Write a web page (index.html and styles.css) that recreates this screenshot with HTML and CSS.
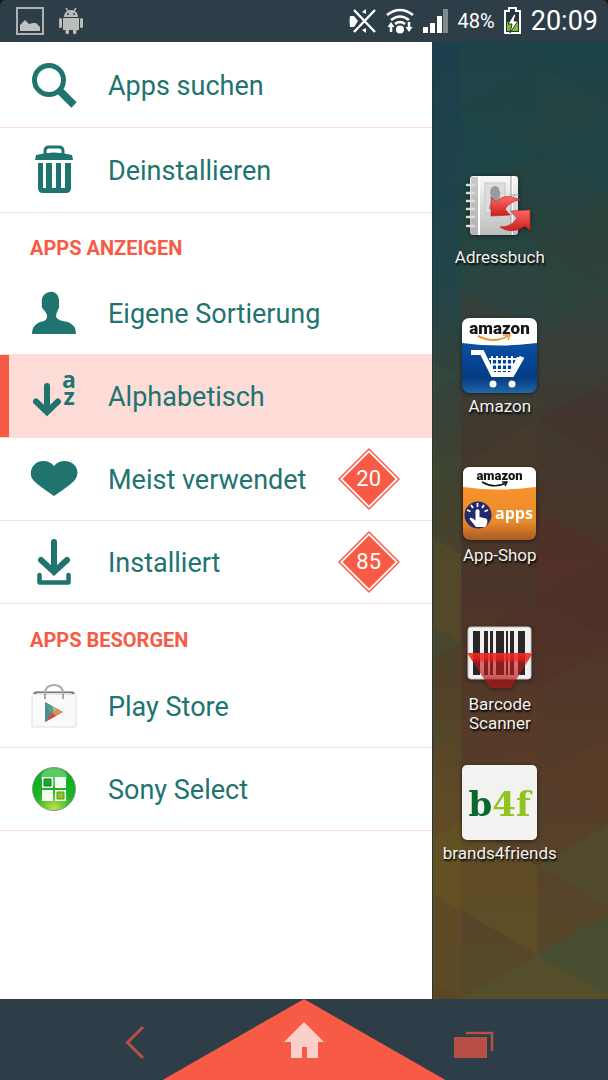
FILE: index.html
```html
<!DOCTYPE html>
<html lang="de">
<head>
<meta charset="utf-8">
<meta name="viewport" content="width=device-width, initial-scale=1">
<title>Apps</title>
<link rel="stylesheet" href="styles.css">
</head>
<body>
<div class="screen">
  <header class="status">
    <div class="status-group">
      <svg class="ico-picture" width="28" height="28" viewBox="0 0 28 28"><path d="M1 1H27V27H1Z" fill="none" stroke="#aeb2b0" stroke-width="2"/><path d="M4 23V18L9 13L13 17L17 16L20 16L24 20V24H4Z" fill="#bfc2c0"/></svg>
      <svg width="26" height="28" viewBox="0 0 26 28" fill="#b9bcb9"><path d="M6 10C6 6 9 3 13 3S20 6 20 10Z"/><path d="M8 1L10 4M18 1L16 4" stroke="#b9bcb9" stroke-width="1.4"/><path d="M5 11H21V23H18.500V26Q17 28.500 15 26V23H11V26Q9 28.500 7.500 26V23H5Z"/><rect x="1" y="11" width="3" height="10" rx="1.500"/><rect x="22" y="11" width="3" height="10" rx="1.500"/><circle cx="10" cy="7" r="1" fill="#2d3e48"/><circle cx="16" cy="7" r="1" fill="#2d3e48"/></svg>
    </div>
    <div class="status-group status-right">
      <svg width="28" height="28" viewBox="0 0 28 28"><path d="M1 9H5L9 14L5 20H1Q0 14 1 9Z" fill="#fff"/><path d="M17 2V7L13 5ZM17 26V21L13 23Z" fill="#fff"/><path d="M5 3L26 25M26 3L5 25" stroke="#fff" stroke-width="2.400"/></svg>
      <svg width="28" height="28" viewBox="0 0 28 28" fill="none" stroke="#fff" stroke-width="2.600"><path d="M1 8Q14-2 27 8M5 13Q14 6 23 13M9 17Q14 13 19 17"/><circle cx="14" cy="22.500" r="4" fill="#fff" stroke="none"/><path d="M5 25V20M23 15V21" stroke-width="2.500"/><path d="M1.500 20L5 15L8.500 20ZM19.500 20L23 25L26.500 20Z" fill="#fff" stroke="none"/></svg>
      <svg class="ico-signal" width="26" height="24" viewBox="0 0 26 24" fill="#fff"><path d="M0 18H5V24H0ZM7 14H12V24H7ZM14 7H19V24H14Z"/><path d="M20 0H25V24H20Z" fill="#848a8c"/></svg>
      <span class="percent">48%</span>
      <svg width="18" height="28" viewBox="0 0 18 28"><path d="M5 1H12V4H16V26H1V4H5Z" fill="#26343b" stroke="#fff" stroke-width="2"/><path d="M3 15H14V24H3Z" fill="#7fc01c"/><path d="M10 7L4 17H8L6 26L14 14H10L12 7Z" fill="#fff" stroke="#26343b"/></svg>
      <time class="clock">20:09</time>
    </div>
  </header>

  <main class="main">
    <nav class="drawer">
      <ul class="group tall">
        <li><a class="row" href="#suchen"><svg class="icon" viewBox="0 0 48 48"><circle cx="19" cy="19" r="14.500" fill="none" stroke="#20746f" stroke-width="5"/><path d="M29 29L44 44" stroke="#20746f" stroke-width="7.500"/></svg><span class="label">Apps suchen</span></a></li>
        <li><a class="row" href="#deinstallieren"><svg class="icon" viewBox="0 0 48 48" fill="#20746f"><path d="M15 9V5Q15 1 19 1H29Q33 1 33 5V9" fill="none" stroke="#20746f" stroke-width="3"/><path d="M6 9Q24 4 42 9L43 14H5Z"/><path fill-rule="evenodd" d="M8 17H41V42Q41 47 36 47H13Q8 47 8 42ZM13 17V42H16V17ZM22 17V42H26V17ZM31 17V42H35V17Z"/></svg><span class="label">Deinstallieren</span></a></li>
      </ul>
      <h2 class="heading">APPS ANZEIGEN</h2>
      <ul class="group">
        <li><a class="row" href="#eigene"><svg class="icon" viewBox="0 0 48 48" fill="#20746f"><path d="M20 3C26 2 30 7 29 16Q30 18 28 21Q26 24 26 28Q28 32 38 33Q46 36 46 45H2Q2 36 10 33Q18 32 17 26Q16 23 13 20Q11 17 12 16C11 9 13 4 20 3Z"/></svg><span class="label">Eigene Sortierung</span></a></li>
        <li><a class="row active" href="#alphabetisch" aria-current="true"><svg class="icon" viewBox="0 0 48 48"><path d="M17 14V39M6 29.500L17 40L28 29.500" fill="none" stroke="#20746f" stroke-width="6" stroke-linecap="round"/><text class="az" x="39" y="16">a</text><text class="az" x="39" y="33">z</text></svg><span class="label">Alphabetisch</span></a></li>
        <li><a class="row" href="#meist"><svg class="icon" viewBox="0 0 48 48" fill="#20746f"><path d="M24 11C28 6 34 5 40 7C48 10 50 20 44 26Q39 31 24 41Q9 31 4 26C-2 20 1 10 8 7C14 5 20 6 24 11Z"/></svg><span class="label">Meist verwendet</span><span class="badge"><svg class="badge-bg" viewBox="0 0 62 62"><path d="M31 1L61 31L31 61L1 31Z" fill="#fff" stroke="#f75b45" stroke-width="1.500" stroke-linejoin="round"/><path d="M31 4.500L57.500 31L31 57.500L4.500 31Z" fill="#f75b45"/></svg><span class="count">20</span></span></a></li>
        <li><a class="row" href="#installiert"><svg class="icon" viewBox="0 0 48 48" fill="none" stroke="#20746f"><path d="M24 4V32M11 22L24 34L37 22" stroke-width="6" stroke-linecap="round"/><path d="M9.500 37V44.500H38.500V37" stroke-width="4.500" stroke-linecap="round" stroke-linejoin="round"/></svg><span class="label">Installiert</span><span class="badge"><svg class="badge-bg" viewBox="0 0 62 62"><path d="M31 1L61 31L31 61L1 31Z" fill="#fff" stroke="#f75b45" stroke-width="1.500" stroke-linejoin="round"/><path d="M31 4.500L57.500 31L31 57.500L4.500 31Z" fill="#f75b45"/></svg><span class="count">85</span></span></a></li>
      </ul>
      <h2 class="heading heading-wide">APPS BESORGEN</h2>
      <ul class="group">
        <li><a class="row" href="#play"><svg class="icon" viewBox="0 0 48 48"><path d="M4 10H44L46 13V44Q46 45 44 45H4Q2 45 2 44V13Z" fill="#fafafa" stroke="#dcdede"/><path d="M5 9.500H43L45 12H3Z" fill="#777"/><path d="M7 11H41L43 13H5Z" fill="#e4e4e4"/><path d="M15 17V12Q15 3 24 3T33 12V17" fill="none" stroke="#a9a9a9" stroke-width="2"/><path d="M15 20V40L33 30Z" fill="#4a918d"/><path d="M15 20L27 27L20 32Z" fill="#5b9b90"/><path d="M27 27L33 30L25 34L22 30Z" fill="#e9894e"/><path d="M15 40L22 31L26 34Z" fill="#e0434c"/><path d="M22 24L27 27L24 30Z" fill="#a9c866"/></svg><span class="label">Play Store</span></a></li>
        <li><a class="row" href="#sony"><svg class="icon" viewBox="0 0 48 48"><defs><radialGradient id="bubble" cx=".5" cy=".95" r=".75"><stop offset="0" stop-color="#c3e24e"/><stop offset=".35" stop-color="#5fc52f"/><stop offset=".6" stop-color="#1fb326"/><stop offset="1" stop-color="#12ad22"/></radialGradient></defs><circle cx="24" cy="24" r="21.500" fill="url(#bubble)" stroke="#829b87"/><ellipse cx="24" cy="12" rx="13" ry="9" fill="#b6ecb2" opacity=".45"/><path d="M12 12H23V23H12ZM25 12H36V23H25ZM12 25H23V36H12ZM25 25H36V36H25Z" fill="#f3faef"/><path d="M14 14H21V21H14Z" fill="#18a83a" stroke="#0b8120"/><path d="M27 27H34V34H27Z" fill="#8fc224" stroke="#4a9b1a"/></svg><span class="label">Sony Select</span></a></li>
      </ul>
    </nav>

    <section class="home">
      <svg class="wallpaper" viewBox="0 0 176 957" preserveAspectRatio="none">
        <defs>
          <linearGradient id="base" x1="0" y1="0" x2="0" y2="1"><stop offset="0" stop-color="#1c4348"/><stop offset=".16" stop-color="#254340"/><stop offset=".3" stop-color="#36403a"/><stop offset=".42" stop-color="#42382e"/><stop offset=".56" stop-color="#4b3429"/><stop offset=".7" stop-color="#533928"/><stop offset=".84" stop-color="#57412a"/><stop offset="1" stop-color="#564a29"/></linearGradient>
          <linearGradient id="edge" x1="0" y1="0" x2="0" y2="1"><stop offset="0" stop-color="#1b3f4d"/><stop offset=".25" stop-color="#22454a"/><stop offset=".36" stop-color="#35423a"/><stop offset=".5" stop-color="#45432d"/><stop offset=".66" stop-color="#4f4029"/><stop offset=".8" stop-color="#604b26"/><stop offset="1" stop-color="#5c4a25"/></linearGradient>
        </defs>
        <path fill="url(#base)" d="M0 0H176V957H0Z"/>
        <path fill="url(#edge)" d="M0 0H28V957H0Z"/>
        <g fill-opacity=".4">
          <path fill="#254149" d="M28 0H66L105 23L28 68Z"/>
          <path fill="#294640" d="M105 23L182 68L105 112Z"/>
          <path fill="#174851" d="M28 68L105 112L28 157Z"/>
          <path fill="#17404f" d="M0 130L28 157L0 174Z"/>
          <path fill="#1b454b" d="M105 112L182 68V157Z"/>
          <path fill="#214a47" d="M28 157L105 201L28 246Z"/>
          <path fill="#304237" d="M105 201L182 157V246Z"/>
          <path fill="#31503e" d="M0 319L28 334L0 350Z"/>
          <path fill="#28484a" d="M28 246L105 201V290Z"/>
          <path fill="#28463f" d="M105 201L182 246L105 290Z"/>
          <path fill="#394532" d="M28 334L105 290V379Z"/>
          <path fill="#472f2a" d="M105 379L182 334V423Z"/>
          <path fill="#3f4c33" d="M0 407L28 423L0 440Z"/>
          <path fill="#4c3e2e" d="M28 423L105 379V468Z"/>
          <path fill="#592a29" d="M105 468L182 512L105 557Z"/>
          <path fill="#4d2b27" d="M105 557L182 512V601Z"/>
          <path fill="#562e28" d="M105 557L182 601L105 646Z"/>
          <path fill="#605426" d="M0 496L28 512V601L0 585Z"/>
          <path fill="#405036" d="M0 585L28 601L0 618Z"/>
          <path fill="#52302a" d="M28 601L105 557V646Z"/>
          <path fill="#5e3929" d="M28 690L105 646V735Z"/>
          <path fill="#484d30" d="M0 674L28 690L0 707Z"/>
          <path fill="#5e3b29" d="M105 735L182 690V779Z"/>
          <path fill="#6c5b20" d="M0 796L28 779V868L0 852Z"/>
          <path fill="#6b5924" d="M28 779L105 824L28 868Z"/>
          <path fill="#4a5638" d="M105 824L182 779V868Z"/>
          <path fill="#6b5922" d="M28 868L105 824V913Z"/>
          <path fill="#32583d" d="M105 913L182 868V957Z"/>
          <path fill="#56582f" d="M28 957L105 913L182 957Z"/>
          <path fill="#5f4020" d="M0 940L28 957H0Z"/>
        </g>
      </svg>
      <div class="apps">
        <a class="app" href="#adressbuch"><svg class="app-icon" viewBox="0 0 75 75"><defs><linearGradient id="page" x1="0" y1="0" x2="0" y2="1"><stop offset="0" stop-color="#f8f8f8"/><stop offset="1" stop-color="#bdbdbb"/></linearGradient><linearGradient id="red" x1="0" y1="0" x2="0" y2="1"><stop offset="0" stop-color="#ff6b66"/><stop offset="1" stop-color="#c91e1c"/></linearGradient></defs><rect x="8" y="7" width="48" height="59" rx="3" fill="url(#page)"/><path d="M9 8H16V65H9Z" fill="#aaa" opacity=".6"/><path d="M17 7V66M50 7V66" stroke="#fff" stroke-width="2"/><path d="M49 7V66M49 26H57M49 45H57" stroke="#999"/><rect x="23" y="14" width="20" height="30" fill="#dedede" stroke="#c5c5c5"/><path d="M27 40Q27 34 31 32Q28 27 28 23Q29 17 33 17T38 23Q39 27 36 32Q40 34 40 40Z" fill="#9b9b9b"/><path d="M5 16H12M5 24H12M5 32H12M5 40H12M5 48H12M5 57H12" stroke="#ddd" stroke-width="2.500" stroke-linecap="round"/><path d="M29 28L34 33Q43 23 58 31Q48 32 43 40L48 46L29 47Z" fill="url(#red)" stroke="#b82927" stroke-width=".7"/><path d="M68 41V61L63 57Q50 66 38 58Q50 58 55 49L49 42Z" fill="url(#red)" stroke="#b82927" stroke-width=".7"/></svg><span class="app-name">Adressbuch</span></a>

        <a class="app" href="#amazon"><svg class="app-icon" viewBox="0 0 75 75"><defs><linearGradient id="blue" x1="0" y1="0" x2="0" y2="1"><stop offset="0" stop-color="#1769ad"/><stop offset=".5" stop-color="#06479a"/><stop offset=".8" stop-color="#053c83"/><stop offset="1" stop-color="#2167a8"/></linearGradient></defs><rect width="75" height="75" rx="8" fill="url(#blue)"/><path d="M0 25V8Q0 0 8 0H67Q75 0 75 8V25Q38 30 0 25Z" fill="#fff"/><text class="amazon-big" x="37.500" y="16">amazon</text><path d="M16 18Q32 26 46 18" fill="none" stroke="#f19331" stroke-width="2"/><path d="M41 17L48 17L46 22" fill="none" stroke="#f19331" stroke-width="1.500"/><path d="M9 34.500H20L31 56.500H50L60 39" fill="none" stroke="#fff" stroke-width="5"/><path d="M27 41H55M29 46.500H53M31 52H50M30 38V55M35 38V55M40 38V55M45 38V55M50 38V55" stroke="#fff" stroke-width="1.800"/><path d="M55 39H62L54 54H48Z" fill="#fff"/><circle cx="31" cy="66" r="3.500" fill="#fff"/><circle cx="50" cy="66" r="3.500" fill="#fff"/></svg><span class="app-name">Amazon</span></a>

        <a class="app" href="#app-shop"><svg class="app-icon" viewBox="0 0 75 75"><defs><linearGradient id="orange" x1="0" y1="0" x2="0" y2="1"><stop offset=".3" stop-color="#f7922c"/><stop offset=".75" stop-color="#e98a2c"/><stop offset="1" stop-color="#a85b25"/></linearGradient></defs><rect x="1" y="0" width="73" height="73" rx="7" fill="url(#orange)"/><path d="M1 20V7Q1 0 8 0H67Q74 0 74 7V20Q38 25 1 20Z" fill="#fff"/><text class="amazon-small" x="37.500" y="13">amazon</text><path d="M20 15Q32 22 44 16M40 15H45L43 19" fill="none" stroke="#181818" stroke-width="1.500"/><circle cx="16" cy="48" r="13.500" fill="#24296c"/><path d="M13.500 43.500Q15.500 41 17.500 43.500V50L24 51.500Q26 52 25 57L23 60H14L7.500 52Q8 50 11 51.500L13.500 53.500Z" fill="#fff"/><path d="M15.500 36V40M9 38L11 41M22 38L20 41M5 43L8.500 44.500M26 43L22.500 44.500" stroke="#fff" stroke-width="1.800"/><text class="apps-word" x="52" y="52">apps</text></svg><span class="app-name">App-Shop</span></a>

        <a class="app" href="#barcode"><svg class="app-icon" viewBox="0 0 75 75"><defs><linearGradient id="beam" x1="0" y1="0" x2="0" y2="1"><stop offset="0" stop-color="#f52a22" stop-opacity=".9"/><stop offset=".18" stop-color="#ee1b18" stop-opacity=".85"/><stop offset=".3" stop-color="#c71818" stop-opacity=".6"/><stop offset="1" stop-color="#a91b1b" stop-opacity=".75"/></linearGradient></defs><rect x="6" y="11" width="63" height="52" rx="3" fill="#f1f1f1" stroke="#c6c6c6"/><path d="M11 15H18V59H11ZM22 15H26V59H22ZM28 15H31V59H28ZM34 15H42V59H34ZM44 15H46V59H44ZM48 15H52V59H48ZM56 15H63V59H56Z" fill="#2c2725"/><path d="M5 37H71L49 72H28Z" fill="url(#beam)"/></svg><span class="app-name">Barcode Scanner</span></a>

        <a class="app" href="#b4f"><svg class="app-icon" viewBox="0 0 75 75"><rect width="75" height="75" rx="5" fill="#f2f2f1"/><text class="b4f" x="37.500" y="51"><tspan fill="#07672d">b</tspan><tspan fill="#91c41e">4f</tspan></text></svg><span class="app-name">brands4friends</span></a>
      </div>
    </section>
  </main>

  <footer class="navbar">
    <button class="nav-btn" aria-label="Zurück"><svg width="40" height="40" viewBox="0 0 40 40"><path d="M28 5L12.500 20.500L28 36" fill="none" stroke="#b84f46" stroke-width="3"/></svg></button>
    <button class="nav-home" aria-label="Startseite"><svg width="40" height="40" viewBox="0 0 40 40"><path d="M20 2L40 22H34V38H23V27H18V38H7V22H0Z" fill="#fdcfca"/></svg></button>
    <button class="nav-btn" aria-label="Letzte Apps"><svg width="40" height="40" viewBox="0 0 40 40"><path d="M0 15H33V36H0Z" fill="#b84f46"/><path d="M12 11H38V29" fill="none" stroke="#b84f46" stroke-width="2.500"/></svg></button>
  </footer>
</div>
</body>
</html>
```

FILE: styles.css
```css
* { box-sizing: border-box; }

body {
  margin: 0;
  background: #15181a;
  font-family: Roboto, "Liberation Sans", sans-serif;
}

a { color: inherit; text-decoration: none; }
svg { display: block; flex: none; }

.screen {
  display: flex;
  flex-direction: column;
  min-height: 100vh;
  overflow: hidden;
  border-radius: 6px 6px 0 0;
  background: #2d3e48;
}

.status {
  display: flex;
  justify-content: space-between;
  align-items: center;
  height: 42px;
  padding: 0 10px 0 16px;
  color: #fff;
}

.status-group {
  display: flex;
  align-items: center;
  gap: 14px;
}

.status-right { gap: 9px; }
.percent { font-size: 20px; line-height: 24px; }
.clock { font-size: 27px; line-height: 32px; }

.main {
  display: grid;
  grid-template-columns: 71fr 29fr;
  flex: 1;
}

.drawer {
  padding-top: 1px;
  background: #fff;
  color: #20746f;
}

.group {
  margin: 0;
  padding: 0;
  list-style: none;
}

.row {
  display: flex;
  align-items: center;
  gap: 30px;
  height: 83px;
  padding: 0 32px 0 30px;
  border-bottom: 1px solid #fbdcd7;
}

.tall .row { height: 85px; }

.active {
  background: #fddcd8;
  box-shadow: inset 9px 0 #f75b45;
}

.icon {
  width: 48px;
  height: 48px;
  overflow: visible;
}

.label {
  flex: 1;
  padding-top: 2px;
  font-size: 27px;
  line-height: 32px;
  white-space: nowrap;
}

.az {
  fill: #20746f;
  font: bold 23px "Open Sans", sans-serif;
  text-anchor: middle;
}

.heading {
  margin: 0;
  padding: 23px 30px 12px;
  color: #f75b45;
  font-size: 20px;
  font-weight: 700;
  line-height: 24px;
}

.heading-wide { padding: 24px 30px 13px; }

.badge {
  display: grid;
  place-items: center;
  width: 62px;
  height: 62px;
}

.badge-bg,
.count { grid-area: 1 / 1; }
.badge-bg { width: 100%; height: 100%; }

.count {
  color: #fff;
  font-size: 22px;
  line-height: 24px;
}

.home {
  position: relative;
  overflow: hidden;
  border-left: 1px solid #25383a;
}

.wallpaper {
  position: absolute;
  inset: 0;
  width: 100%;
  height: 100%;
}

.apps {
  position: relative;
  display: grid;
  grid-auto-rows: 149px;
  padding: 127px 41px 0 0;
}

.app {
  display: flex;
  flex-direction: column;
  align-items: center;
  gap: 4px;
}

.app-icon {
  width: 75px;
  height: 75px;
  overflow: visible;
  filter: drop-shadow(0 1px 2px rgba(0, 0, 0, .5));
}

.app-name {
  max-width: 120px;
  color: #f0f0ee;
  font-size: 17px;
  line-height: 19px;
  text-align: center;
  text-shadow: 1px 2px 2px #000;
}

.amazon-big,
.amazon-small,
.apps-word,
.b4f { text-anchor: middle; }
.amazon-big { font: 900 17px Roboto, sans-serif; fill: #151515; }
.amazon-small { font: 900 13px Roboto, sans-serif; fill: #151515; }
.apps-word { font: bold 16px "Open Sans", sans-serif; fill: #fff; }
.b4f { font: bold 34px "DejaVu Serif", serif; }

.navbar {
  display: flex;
  justify-content: center;
  gap: 8px;
  height: 81px;
}

.nav-btn,
.nav-home {
  display: grid;
  place-items: center;
  margin: 0;
  padding: 0;
  border: 0;
  background: none;
}

.nav-btn { width: 40px; padding-top: 4px; }

.nav-home {
  width: 283px;
  background: #f75b45;
  clip-path: polygon(50% 0, 100% 100%, 0 100%);
}
```
